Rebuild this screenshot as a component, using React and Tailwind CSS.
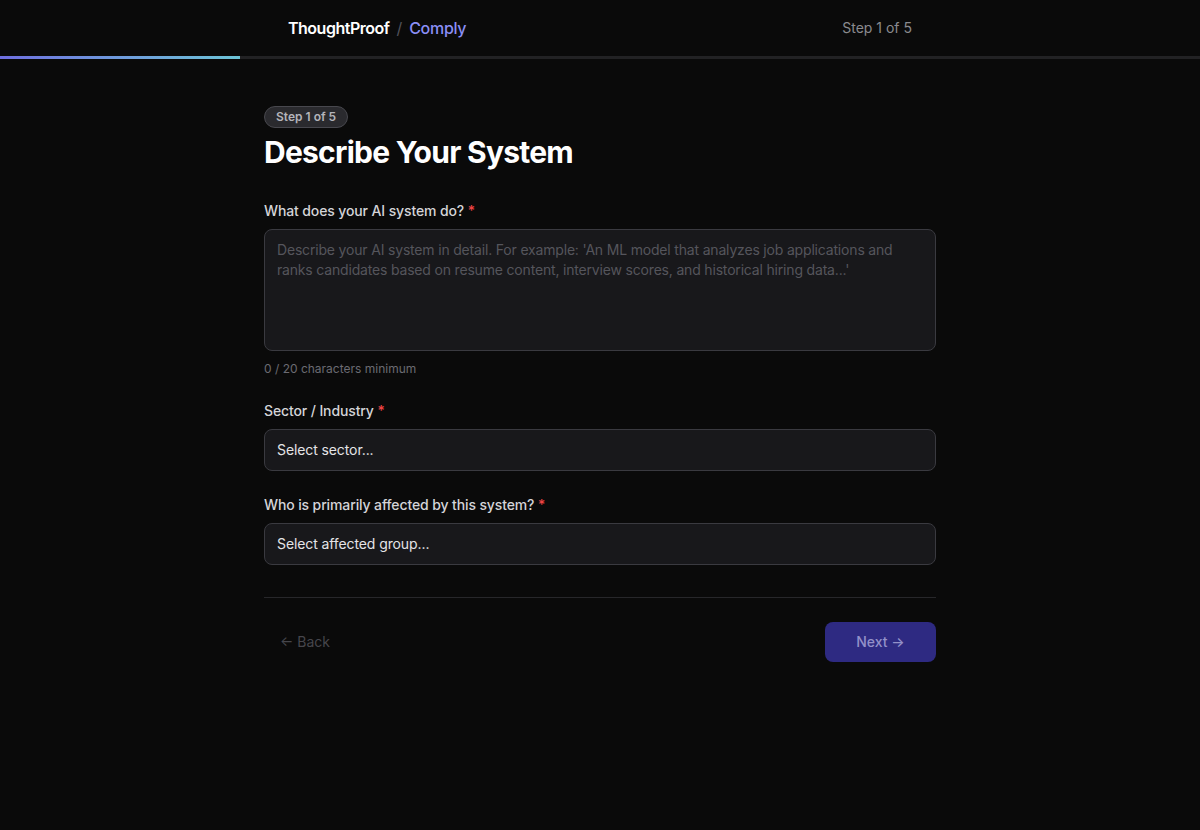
import React from 'react'

const font = { fontFamily: 'Inter, "Noto Sans", sans-serif' }

function Label({ children }) {
  return (
    <label className="mb-2 block text-sm font-medium tracking-[-0.12px] text-[#d4d4d8]">
      {children} <span className="text-[#ef4444]">*</span>
    </label>
  )
}

function SelectBox({ text }) {
  return (
    <div className="flex h-[42px] items-center rounded-lg border border-[#3a3a40] bg-[#18181b] px-3 text-sm tracking-[-0.1px] text-[#e4e4e7]">
      {text}
    </div>
  )
}

export default function App() {
  return (
    <div className="min-h-[830px] bg-[#0a0a0a]" style={font}>
      <header>
        <div className="mx-auto flex h-[56px] max-w-2xl items-center justify-between px-6">
          <div className="flex items-center gap-[7px] text-base">
            <span className="font-semibold tracking-[-0.5px] text-white">ThoughtProof</span>
            <span className="text-[#52525b]">/</span>
            <span className="font-medium tracking-[-0.3px] text-[#8b8ff5]">Comply</span>
          </div>
          <span className="text-sm text-[#8a8a8f]">Step 1 of 5</span>
        </div>
        <div className="h-[3px] w-full bg-[#222224]">
          <div className="h-full w-[20%] bg-gradient-to-r from-[#6f6fe0] to-[#6cc4d6]" />
        </div>
      </header>

      <main className="mx-auto max-w-2xl pt-[48px]">
        <div className="flex h-[20px] items-start">
          <span className="-mt-[1px] rounded-full border border-[#48484e] bg-[#2a2a2e] px-[11px] py-[2px] text-xs font-semibold text-[#b4b4ba]">
            Step 1 of 5
          </span>
        </div>
        <h1 className="mt-[7px] text-[30px] font-bold leading-9 tracking-tight text-white">
          Describe Your System
        </h1>

        <div className="mt-[31px]">
          <Label>What does your AI system do?</Label>
          <div className="h-[122px] rounded-lg border border-[#3a3a40] bg-[#18181b] px-3 pt-[10px] text-sm leading-5 tracking-[-0.18px] text-[#55555c]">
            Describe your AI system in detail. For example: 'An ML model that analyzes job applications and ranks candidates based on resume content, interview scores, and historical hiring data...'
          </div>
          <p className="mt-[10px] text-xs text-[#6b6b72]">0 / 20 characters minimum</p>
        </div>

        <div className="mt-[24px]">
          <Label>Sector / Industry</Label>
          <SelectBox text="Select sector..." />
        </div>

        <div className="mt-[24px]">
          <Label>Who is primarily affected by this system?</Label>
          <SelectBox text="Select affected group..." />
        </div>

        <div className="mt-8 border-t border-[#27272a] pt-6">
          <div className="flex items-center justify-between">
            <button className="px-4 py-2 text-sm text-[#46464c]">← Back</button>
            <button className="flex h-10 w-[111px] items-center justify-center rounded-lg bg-[#2e2a82] text-sm font-medium text-[#9391c9]">
              Next →
            </button>
          </div>
        </div>
      </main>
    </div>
  )
}
